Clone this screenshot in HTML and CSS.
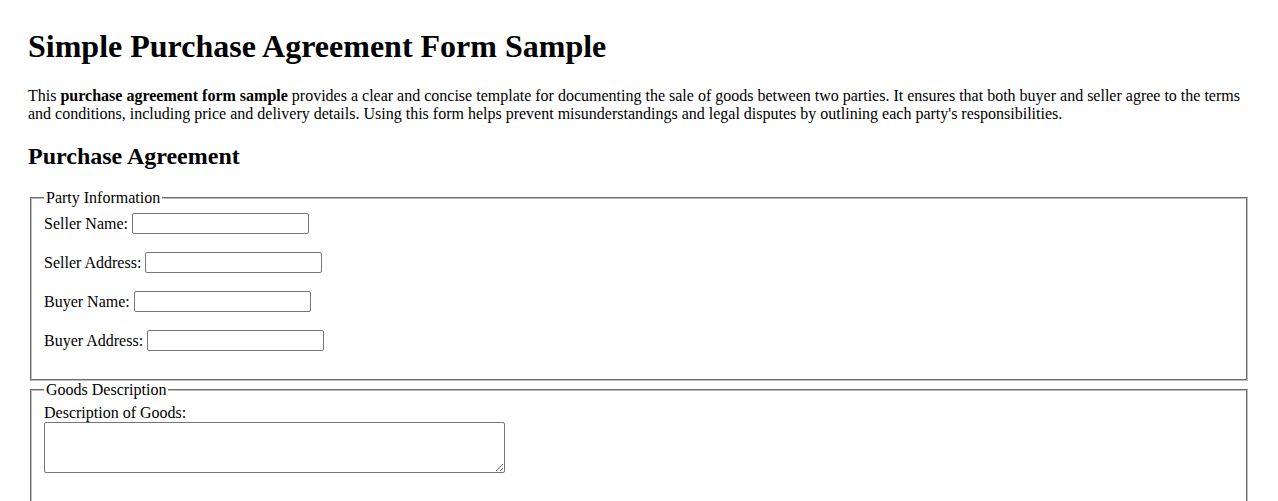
FILE: index.html
```html
<!DOCTYPE html>
<html lang="en">
<head>
<meta charset="utf-8">
<title>Simple Purchase Agreement Form Sample</title>
<link rel="stylesheet" href="styles.css">
</head>
<body>
<main class="page">
  <h1 class="title">Simple Purchase Agreement Form Sample</h1>
  <p class="intro">This <strong>purchase agreement form sample</strong> provides a clear and concise template for documenting the sale of goods between two parties. It ensures that both buyer and seller agree to the terms and conditions, including price and delivery details. Using this form helps prevent misunderstandings and legal disputes by outlining each party's responsibilities.</p>
  <h2 class="subtitle">Purchase Agreement</h2>
  <form class="form">
    <fieldset class="group">
      <legend class="legend">Party Information</legend>
      <div class="row"><label for="sn">Seller Name:</label><input class="field" id="sn" type="text"></div>
      <div class="row"><label for="sa">Seller Address:</label><input class="field" id="sa" type="text"></div>
      <div class="row"><label for="bn">Buyer Name:</label><input class="field" id="bn" type="text"></div>
      <div class="row"><label for="ba">Buyer Address:</label><input class="field" id="ba" type="text"></div>
    </fieldset>
    <fieldset class="group group-goods">
      <legend class="legend">Goods Description</legend>
      <label class="block-label" for="gd">Description of Goods:</label>
      <textarea class="area" id="gd"></textarea>
      <div class="spacer"></div>
    </fieldset>
  </form>
</main>
</body>
</html>
```

FILE: styles.css
```css
html, body {
  margin: 0;
  padding: 0;
  background: #ffffff;
}

body {
  font-family: "Liberation Serif", "Times New Roman", serif;
  font-size: 16px;
  color: #000000;
}

.page {
  padding: 28px 28px 0 28px;
}

.title {
  font-size: 32px;
  line-height: 37px;
  font-weight: bold;
  margin: 0 0 22px 0;
}

.intro {
  margin: 0;
  line-height: normal;
}

.subtitle {
  font-size: 24px;
  font-weight: bold;
  margin: 19.5px 0 19.92px 0;
}

.form {
  margin: 0;
}

.group {
  margin: 0 2px;
  padding: 6px 12px 10px 12px;
  border: 2px groove #c0c0c0;
  min-width: 0;
}

.group-goods {
  padding-top: 5px;
}

.legend {
  padding: 0 2px;
  font-size: 16px;
}

.row {
  display: flex;
  align-items: center;
  gap: 4px;
  height: 21px;
  margin-bottom: 18px;
}

.field {
  box-sizing: border-box;
  width: 177px;
  height: 21px;
  margin: 0;
  padding: 1px 2px;
  border: 1px solid #767676;
  border-radius: 2px;
  background: #ffffff;
  font-family: "Liberation Sans", Arial, sans-serif;
  font-size: 13.33px;
}

.block-label {
  display: block;
  line-height: 18px;
}

.area {
  display: block;
  box-sizing: border-box;
  width: 461px;
  height: 51px;
  margin: 0;
  padding: 2px;
  border: 1px solid #767676;
  border-radius: 2px;
  font-family: "Liberation Mono", monospace;
  font-size: 13.33px;
}

.spacer {
  height: 60px;
}
```
